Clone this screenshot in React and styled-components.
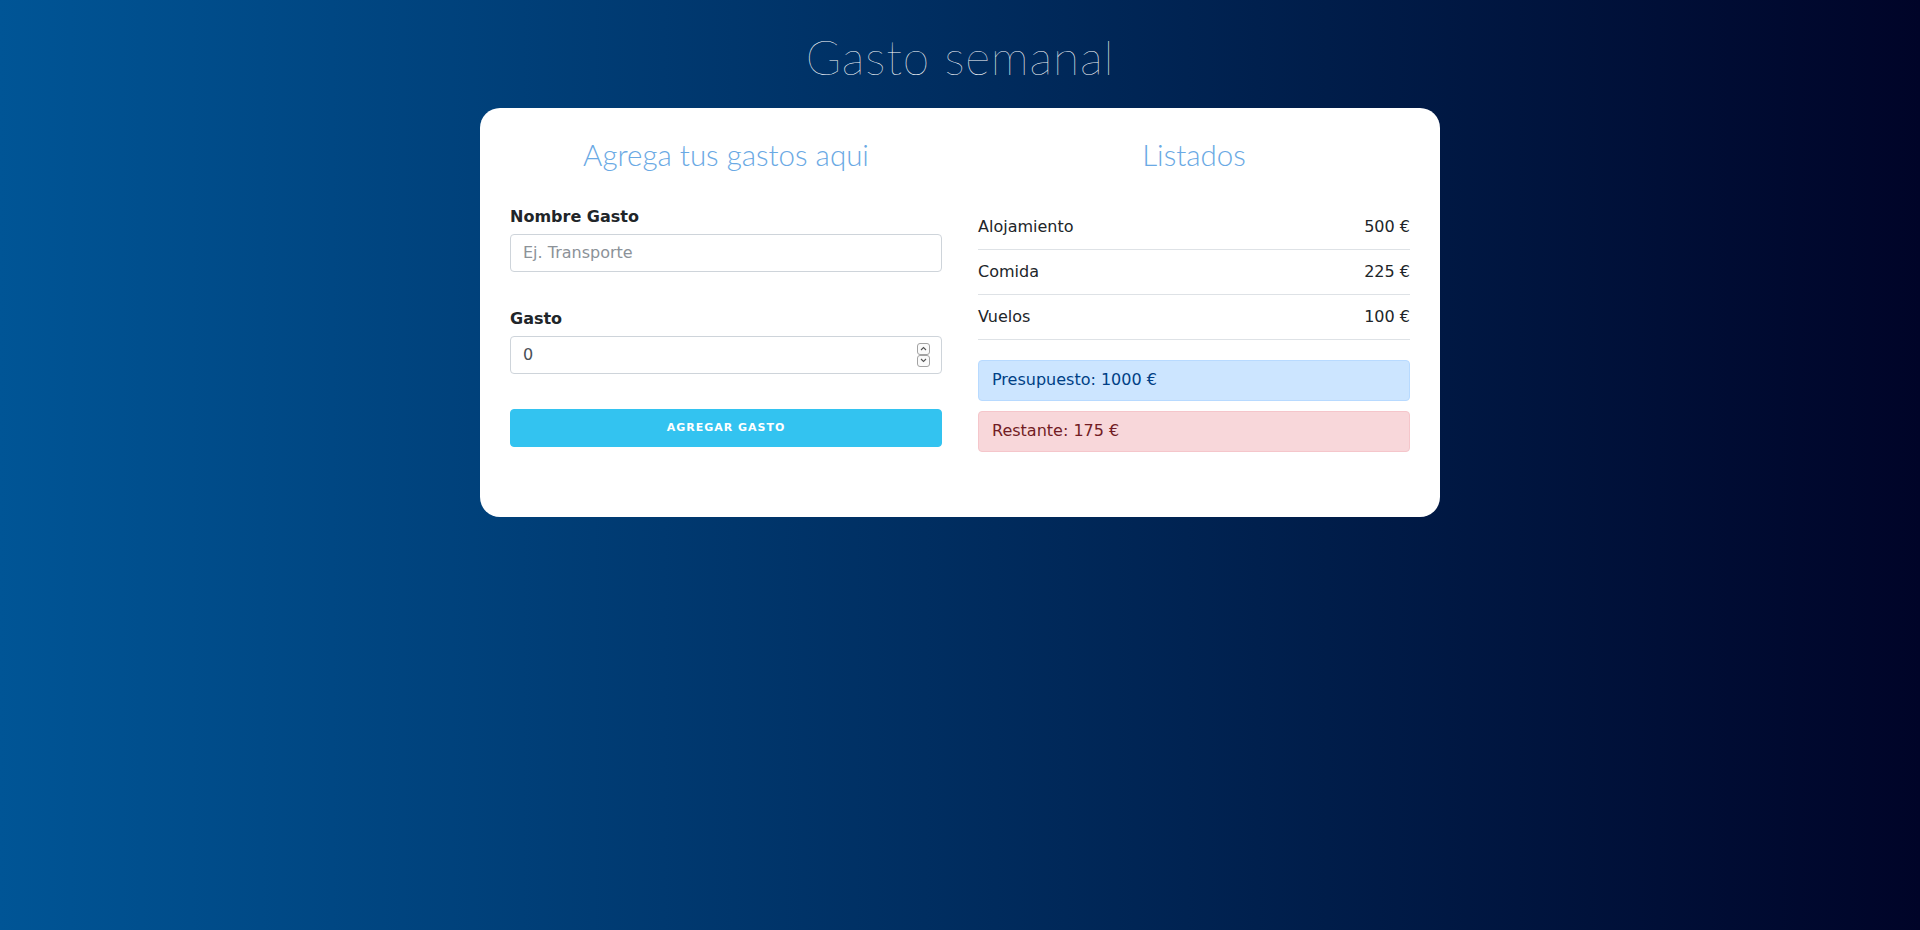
import React from 'react'
import styled, { createGlobalStyle } from 'styled-components'

const GlobalStyle = createGlobalStyle`
    html, body {
        margin: 0;
        padding: 0;
    }
    body {
        min-height: 100vh;
        background: linear-gradient(to right, #005596, #000428);
        font-family: "DejaVu Sans", "Liberation Sans", sans-serif;
        font-size: 16px;
        color: #212529;
    }
    * {
        box-sizing: border-box;
    }
`

const gastos = [
    { id: 1, nombre: 'Alojamiento', cantidad: 500 },
    { id: 2, nombre: 'Comida', cantidad: 225 },
    { id: 3, nombre: 'Vuelos', cantidad: 100 },
]

function App() {
    const presupuesto = 1000
    const restante = presupuesto - gastos.reduce((t, g) => t + g.cantidad, 0)

    return (
        <Page>
            <GlobalStyle />
            <Title>Gasto semanal</Title>

            <Card>
                <Column>
                    <Heading>Agrega tus gastos aqui</Heading>
                    <form onSubmit={(e) => e.preventDefault()}>
                        <FieldGroup>
                            <Label htmlFor='nombre'>Nombre Gasto</Label>
                            <Input id='nombre' type='text' placeholder='Ej. Transporte' />
                        </FieldGroup>
                        <FieldGroup>
                            <Label htmlFor='cantidad'>Gasto</Label>
                            <InputWrap>
                                <Input id='cantidad' type='number' defaultValue='0' />
                                <Spinner aria-hidden='true'>
                                    <SpinBox>
                                        <svg width='7' height='5' viewBox='0 0 7 5'>
                                            <path d='M1 4 L3.5 1.5 L6 4' fill='none' stroke='#555' strokeWidth='1.1' />
                                        </svg>
                                    </SpinBox>
                                    <SpinBox>
                                        <svg width='7' height='5' viewBox='0 0 7 5'>
                                            <path d='M1 1 L3.5 3.5 L6 1' fill='none' stroke='#555' strokeWidth='1.1' />
                                        </svg>
                                    </SpinBox>
                                </Spinner>
                            </InputWrap>
                        </FieldGroup>
                        <SubmitButton type='submit'>Agregar Gasto</SubmitButton>
                    </form>
                </Column>

                <Column>
                    <Heading>Listados</Heading>
                    <List>
                        {gastos.map((g) => (
                            <ListItem key={g.id}>
                                <span>{g.nombre}</span>
                                <span>{g.cantidad} €</span>
                            </ListItem>
                        ))}
                    </List>
                    <Alert $variant='primary'>Presupuesto: {presupuesto} €</Alert>
                    <Alert $variant='danger'>Restante: {restante} €</Alert>
                </Column>
            </Card>
        </Page>
    )
}

export default App

const Page = styled.div`
    min-height: 100vh;
    padding-top: 28px;
`

const Title = styled.h1`
    margin: 0 0 22px;
    text-align: center;
    color: #ffffff;
    font-family: "Lato", sans-serif;
    font-weight: 100;
    font-size: 48px;
    line-height: 1.2;
    letter-spacing: 0.8px;
`

const Card = styled.div`
    width: 960px;
    margin: 0 auto;
    background-color: white;
    border-radius: 20px;
    padding: 29px 30px 65px;
    display: grid;
    grid-template-columns: 1fr 1fr;
    column-gap: 36px;
    align-items: start;
`

const Column = styled.div`
    display: flex;
    flex-direction: column;
`

const Heading = styled.h2`
    margin: 0 0 32px;
    text-align: center;
    color: #6aa9e4;
    font-family: "Lato", sans-serif;
    font-weight: 300;
    font-size: 29.5px;
    line-height: 36px;
`

const FieldGroup = styled.div`
    margin-bottom: 35px;
    &:last-of-type{
        margin-bottom: 35px;
    }
`

const Label = styled.label`
    display: block;
    font-weight: 700;
    line-height: 24px;
    margin-bottom: 5px;
    color: #212529;
`

const InputWrap = styled.div`
    position: relative;
`

const Input = styled.input`
    display: block;
    width: 100%;
    height: 38px;
    padding: 6px 12px;
    font-family: "DejaVu Sans", sans-serif;
    font-size: 16px;
    line-height: 24px;
    color: #495057;
    background-color: #fff;
    border: 1px solid #ced4da;
    border-radius: 4px;
    outline: none;
    -moz-appearance: textfield;

    &::placeholder{
        color: #8c9298;
    }

    &::-webkit-inner-spin-button,
    &::-webkit-outer-spin-button{
        -webkit-appearance: none;
        margin: 0;
    }
`

const Spinner = styled.div`
    position: absolute;
    top: 7px;
    right: 12px;
    display: flex;
    flex-direction: column;
    pointer-events: none;
`

const SpinBox = styled.span`
    display: flex;
    align-items: center;
    justify-content: center;
    width: 13px;
    height: 12px;
    border: 1px solid #a3a3a3;
    border-radius: 3px;
    background-color: #fbfbfb;
`

const SubmitButton = styled.button`
    display: block;
    width: 100%;
    height: 38px;
    padding: 0 30px;
    background-color: #33c3f0;
    border: 1px solid #33c3f0;
    border-radius: 4px;
    color: white;
    font-family: "DejaVu Sans", sans-serif;
    font-size: 11px;
    font-weight: 700;
    letter-spacing: 1px;
    text-transform: uppercase;
    cursor: pointer;
`

const List = styled.ul`
    list-style: none;
    margin: 0 0 20px;
    padding: 0;
`

const ListItem = styled.li`
    display: flex;
    justify-content: space-between;
    padding: 10px 0;
    line-height: 24px;
    border-bottom: 1px solid #dee2e6;
`

const alertColors = {
    primary: { bg: '#cce5ff', border: '#b8daff', text: '#004085' },
    danger: { bg: '#f8d7da', border: '#f5c6cb', text: '#721c24' },
}

const Alert = styled.div`
    padding: 7.5px 13px;
    line-height: 24px;
    border-radius: 4px;
    margin-bottom: 10px;
    background-color: ${(p) => alertColors[p.$variant].bg};
    border: 1px solid ${(p) => alertColors[p.$variant].border};
    color: ${(p) => alertColors[p.$variant].text};

    &:last-child{
        margin-bottom: 0;
    }
`
